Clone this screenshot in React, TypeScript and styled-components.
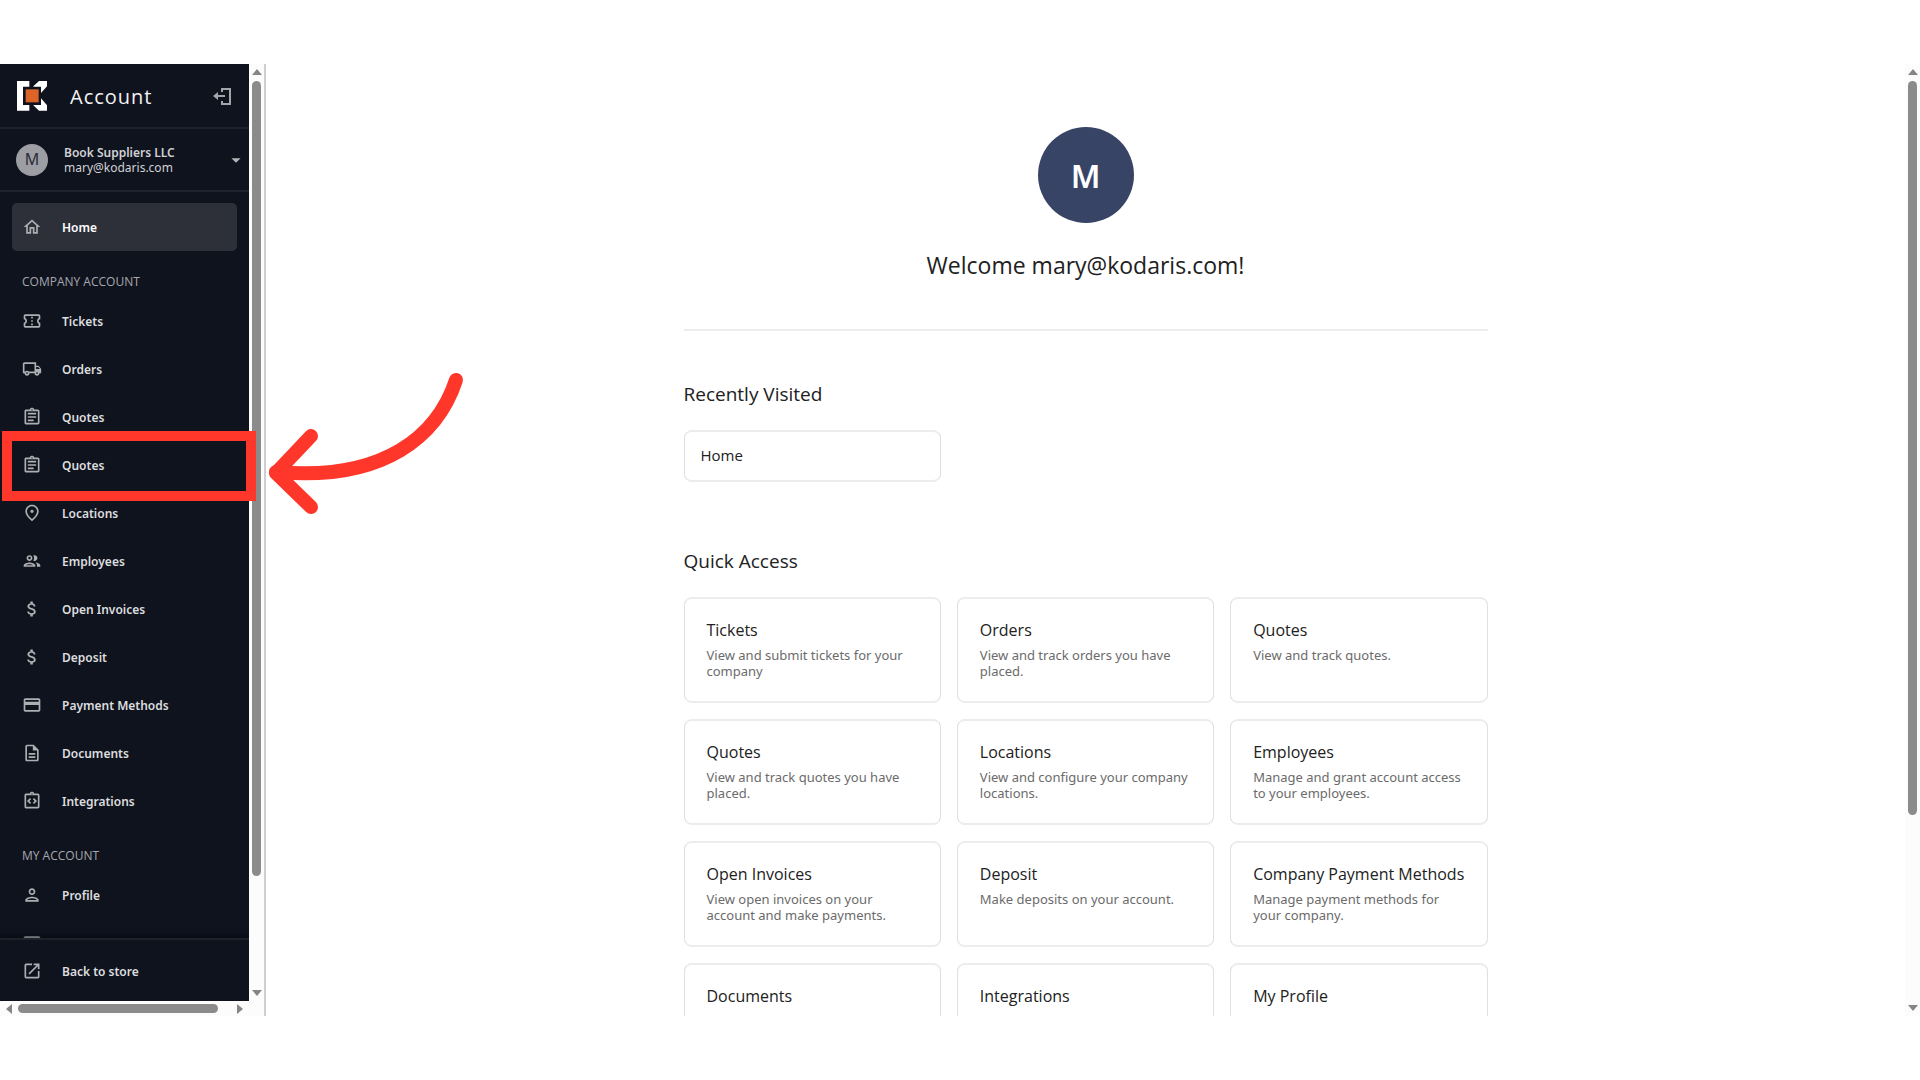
import React from "react";
import styled, { createGlobalStyle, css } from "styled-components";
import type { IconType } from "react-icons";
import {
  MdArrowDropDown,
  MdAttachMoney,
  MdOutlineAssignment,
  MdOutlineConfirmationNumber,
  MdOutlineCreditCard,
  MdOutlineDescription,
  MdOutlineGroup,
  MdOutlineHome,
  MdOutlineIntegrationInstructions,
  MdOutlineLocalShipping,
  MdOutlineOpenInNew,
  MdOutlinePerson,
  MdOutlinePlace,
} from "react-icons/md";

const displayFont = `"Open Sans", "Noto Sans", sans-serif`;

const GlobalStyle = createGlobalStyle`
  *, *::before, *::after { box-sizing: border-box; }
  body {
    margin: 0;
    background: #ffffff;
    color: #212121;
    font-family: "Noto Sans", "Open Sans", sans-serif;
  }
  h1, h2, h3, p, ul { margin: 0; padding: 0; font-weight: 400; }
  h1, h2, h3 { font-family: ${displayFont}; }
  ul { list-style: none; }
  a { color: inherit; text-decoration: none; }
  button { font: inherit; color: inherit; border: 0; padding: 0; background: none; cursor: pointer; }
`;

const Page = styled.div`
  position: relative;
  height: 100vh;
  padding: 64px 0;
  overflow: hidden;
`;

const Frame = styled.div`
  display: flex;
  height: 100%;
`;

const SidebarPane = styled.div`
  display: grid;
  grid-template-columns: 249px 15px;
  grid-template-rows: minmax(0, 1fr) 15px;
  flex: none;
  background: #fcfcfc;
  border-right: 2px solid #cfcfcf;
`;

const Sidebar = styled.aside`
  display: flex;
  flex-direction: column;
  min-height: 0;
  background: #0f131e;
  color: #dcdddf;
`;

const Brand = styled.header`
  display: flex;
  align-items: center;
  flex: none;
  height: 65px;
  padding: 0 18px 0 17px;
  border-bottom: 2px solid #1e222c;
`;

const BrandName = styled.h2`
  flex: 1;
  padding: 2px 0 0 23px;
  font-size: 20px;
  line-height: 28px;
  letter-spacing: 1px;
  color: #f2f2f3;
`;

const LogoutButton = styled.button`
  display: flex;
`;

const AccountSwitch = styled.button`
  display: flex;
  align-items: center;
  flex: none;
  height: 63px;
  padding: 0 2px 0 16px;
  border-bottom: 2px solid #1e222c;
  text-align: left;
  font-size: 12px;
  line-height: 15px;
  color: #d0d1d4;
  svg { color: #b4b5b9; }
`;

const AccountText = styled.span`
  display: flex;
  flex-direction: column;
  flex: 1;
  padding-left: 16px;
`;

const Strong = styled.span`
  font-weight: 600;
`;

const Avatar = styled.span<{ $large?: boolean }>`
  display: flex;
  align-items: center;
  justify-content: center;
  flex: none;
  border-radius: 50%;
  ${({ $large }) =>
    $large
      ? css`
          width: 96px;
          height: 96px;
          background: #384465;
          color: #ffffff;
          font-size: 32px;
          font-weight: 600;
        `
      : css`
          width: 32px;
          height: 32px;
          background: #9d9ea3;
          color: #2a2d36;
          font-size: 16px;
        `}
`;

const Nav = styled.nav`
  flex: 1;
  min-height: 0;
  padding: 11px 12px 0;
  overflow: hidden;
`;

const NavHeading = styled.h3`
  padding: 22px 10px 6px;
  font-size: 12px;
  line-height: 18px;
  color: #a6a8ad;
  text-transform: uppercase;
`;

const NavLink = styled.a<{ $active?: boolean }>`
  display: flex;
  align-items: center;
  gap: 20px;
  height: 48px;
  padding: 0 10px;
  border-radius: 5px;
  font-size: 12px;
  font-weight: 600;
  color: ${({ $active }) => ($active ? "#ffffff" : "#dcdddf")};
  background: ${({ $active }) => ($active ? "#2d3039" : "transparent")};
  svg { flex: none; color: #adafb3; }
`;

const SidebarFooter = styled.footer`
  flex: none;
  height: 63px;
  padding: 7px 12px 6px;
  border-top: 2px solid #1e222c;
  box-shadow: 0 -2px 6px rgba(0, 0, 0, 0.5);
`;

const Track = styled.div<{ $horizontal?: boolean }>`
  display: flex;
  flex-direction: ${({ $horizontal }) => ($horizontal ? "row" : "column")};
  align-items: center;
  gap: 6px;
  flex: none;
  padding: ${({ $horizontal }) => ($horizontal ? "0 6px" : "5px 0")};
  ${({ $horizontal }) => !$horizontal && "width: 15px;"}
  background: #fcfcfc;
`;

const Rail = styled.div<{ $horizontal?: boolean }>`
  display: flex;
  flex-direction: ${({ $horizontal }) => ($horizontal ? "row" : "column")};
  flex: 1;
`;

const Thumb = styled.div<{ $share: number; $horizontal?: boolean }>`
  flex: none;
  ${({ $share, $horizontal }) =>
    $horizontal
      ? css`width: ${$share}%; height: 9px;`
      : css`height: ${$share}%; width: 9px;`}
  border-radius: 5px;
  background: #8b8b8b;
`;

const Triangle = styled.svg`
  flex: none;
  fill: #858585;
`;

const Main = styled.main`
  flex: 1;
  min-width: 0;
  overflow: hidden;
`;

const Content = styled.div`
  width: 804px;
  max-width: 100%;
  margin: 0 auto;
  padding-top: 63px;
`;

const Welcome = styled.header`
  display: flex;
  flex-direction: column;
  align-items: center;
  gap: 24px;
  padding-bottom: 46px;
  border-bottom: 2px solid #ececec;
`;

const WelcomeTitle = styled.h1`
  font-size: 23px;
  line-height: 36px;
`;

const SectionTitle = styled.h2`
  padding: 49px 0 22px;
  font-size: 19px;
  line-height: 28px;
`;

const Section = styled.section`
  & + & { padding-top: 16px; }
`;

const CardGrid = styled.div`
  display: grid;
  grid-template-columns: repeat(3, minmax(0, 1fr));
  gap: 16px;
`;

const Card = styled.a<{ $compact?: boolean }>`
  display: block;
  height: ${({ $compact }) => ($compact ? 52 : 106)}px;
  padding: ${({ $compact }) => ($compact ? "12px 16px" : "19px 22px")};
  border: solid #e2e2e2;
  border-color: #ececec #e0e0e0;
  border-width: 2px 1px;
  border-radius: 8px;
  font-size: 15px;
  line-height: 22px;
  font-family: ${displayFont};
`;

const CardTitle = styled.h3`
  font-size: 16px;
  line-height: 24px;
  white-space: nowrap;
`;

const CardText = styled.p`
  padding-top: 5px;
  font-family: "Noto Sans", "Open Sans", sans-serif;
  font-size: 13px;
  line-height: 16px;
  color: #6b6b6b;
`;

const Highlight = styled.div`
  position: absolute;
  left: 2px;
  top: 431px;
  width: 254px;
  height: 70px;
  border: 10px solid #ff372b;
  pointer-events: none;
`;

const Arrow = styled.svg`
  position: absolute;
  left: 260px;
  top: 360px;
  pointer-events: none;
`;

type Item = { label: string; icon: IconType };

const companyItems: Item[] = [
  { label: "Tickets", icon: MdOutlineConfirmationNumber },
  { label: "Orders", icon: MdOutlineLocalShipping },
  { label: "Quotes", icon: MdOutlineAssignment },
  { label: "Quotes", icon: MdOutlineAssignment },
  { label: "Locations", icon: MdOutlinePlace },
  { label: "Employees", icon: MdOutlineGroup },
  { label: "Open Invoices", icon: MdAttachMoney },
  { label: "Deposit", icon: MdAttachMoney },
  { label: "Payment Methods", icon: MdOutlineCreditCard },
  { label: "Documents", icon: MdOutlineDescription },
  { label: "Integrations", icon: MdOutlineIntegrationInstructions },
];

const personalItems: Item[] = [
  { label: "Profile", icon: MdOutlinePerson },
  { label: "", icon: MdOutlineCreditCard },
];

const cards = [
  { title: "Tickets", text: "View and submit tickets for your company" },
  { title: "Orders", text: "View and track orders you have placed." },
  { title: "Quotes", text: "View and track quotes." },
  { title: "Quotes", text: "View and track quotes you have placed." },
  { title: "Locations", text: "View and configure your company locations." },
  { title: "Employees", text: "Manage and grant account access to your employees." },
  { title: "Open Invoices", text: "View open invoices on your account and make payments." },
  { title: "Deposit", text: "Make deposits on your account." },
  { title: "Company Payment Methods", text: "Manage payment methods for your company." },
  { title: "Documents", text: "" },
  { title: "Integrations", text: "" },
  { title: "My Profile", text: "" },
];

const trianglePoints = {
  up: "0,6 5,0 10,6",
  down: "0,0 10,0 5,6",
  left: "6,0 6,10 0,5",
  right: "0,0 6,5 0,10",
};

function ArrowHead({ dir }: { dir: keyof typeof trianglePoints }) {
  const vertical = dir === "up" || dir === "down";
  return (
    <Triangle width={vertical ? 10 : 6} height={vertical ? 6 : 10}>
      <polygon points={trianglePoints[dir]} />
    </Triangle>
  );
}

function ScrollBar({ share, horizontal }: { share: number; horizontal?: boolean }) {
  return (
    <Track $horizontal={horizontal} aria-hidden="true">
      <ArrowHead dir={horizontal ? "left" : "up"} />
      <Rail $horizontal={horizontal}>
        <Thumb $share={share} $horizontal={horizontal} />
      </Rail>
      <ArrowHead dir={horizontal ? "right" : "down"} />
    </Track>
  );
}

function Logo() {
  return (
    <svg width="30" height="30" viewBox="0 0 90 90" aria-hidden="true">
      <path fill="#fff" d="M0 0H37V17H18V72H37V89H0Z" />
      <path fill="#fff" d="M49 16L66 0H90V16L72 36V17H49Z" />
      <path fill="#fff" d="M49 73L66 89H90V73L72 52V72H49Z" />
      <rect x="26" y="25" width="39" height="39" fill="#dc6427" />
    </svg>
  );
}

function LogoutIcon() {
  return (
    <svg width="18" height="18" viewBox="0 0 18 18" fill="none" stroke="#a3a5aa" strokeWidth="2" aria-hidden="true">
      <path d="M9 5V2H17V17H9V14" />
      <path d="M12 9H3" />
      <path d="M5 5V13L0 9Z" fill="#a3a5aa" stroke="none" />
    </svg>
  );
}

function NavItems({ items }: { items: Item[] }) {
  return (
    <ul>
      {items.map(({ label, icon: Icon }, i) => (
        <li key={i}>
          <NavLink href="#">
            <Icon size={20} aria-hidden="true" />
            {label}
          </NavLink>
        </li>
      ))}
    </ul>
  );
}

export default function App() {
  return (
    <>
      <GlobalStyle />
      <Page>
        <Frame>
          <SidebarPane>
            <Sidebar>
              <Brand>
                <Logo />
                <BrandName>Account</BrandName>
                <LogoutButton type="button" aria-label="Log out">
                  <LogoutIcon />
                </LogoutButton>
              </Brand>
              <AccountSwitch type="button">
                <Avatar>M</Avatar>
                <AccountText>
                  <Strong>Book Suppliers LLC</Strong>
                  <span>mary@kodaris.com</span>
                </AccountText>
                <MdArrowDropDown size={22} aria-hidden="true" />
              </AccountSwitch>
              <Nav>
                <NavLink href="#" $active>
                  <MdOutlineHome size={20} aria-hidden="true" />
                  Home
                </NavLink>
                <NavHeading>Company Account</NavHeading>
                <NavItems items={companyItems} />
                <NavHeading>My Account</NavHeading>
                <NavItems items={personalItems} />
              </Nav>
              <SidebarFooter>
                <NavLink href="#">
                  <MdOutlineOpenInNew size={20} aria-hidden="true" />
                  Back to store
                </NavLink>
              </SidebarFooter>
            </Sidebar>
            <ScrollBar share={88} />
            <ScrollBar share={94} horizontal />
          </SidebarPane>
          <Main>
            <Content>
              <Welcome>
                <Avatar $large>M</Avatar>
                <WelcomeTitle>Welcome mary@kodaris.com!</WelcomeTitle>
              </Welcome>
              <Section>
                <SectionTitle>Recently Visited</SectionTitle>
                <CardGrid>
                  <Card href="#" $compact>Home</Card>
                </CardGrid>
              </Section>
              <Section>
                <SectionTitle>Quick Access</SectionTitle>
                <CardGrid>
                  {cards.map(({ title, text }, i) => (
                    <Card href="#" key={i}>
                      <CardTitle>{title}</CardTitle>
                      <CardText>{text}</CardText>
                    </Card>
                  ))}
                </CardGrid>
              </Section>
            </Content>
          </Main>
          <ScrollBar share={80} />
        </Frame>
        <Highlight />
        <Arrow width="210" height="160" viewBox="260 360 210 160" fill="none" stroke="#ff372b" strokeWidth="14" strokeLinecap="round" strokeLinejoin="round" aria-hidden="true">
          <path d="M456 380C438 435 385 482 276 472" />
          <path d="M311 436L276 473L311 507" />
        </Arrow>
      </Page>
    </>
  );
}
